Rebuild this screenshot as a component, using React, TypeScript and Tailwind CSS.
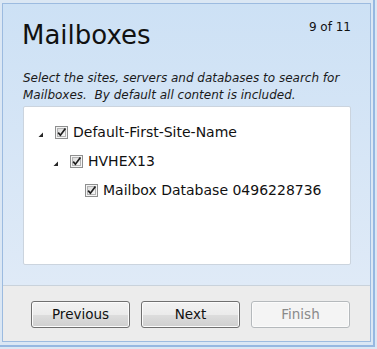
import React from "react";

const font = { fontFamily: '"DejaVu Sans", Verdana, sans-serif' };

function Expander() {
  return (
    <svg width="6" height="6" viewBox="0 0 6 6" className="block">
      <polygon points="5,0.5 5,5 0.5,5" fill="#262626" />
    </svg>
  );
}

function CheckBox() {
  return (
    <svg width="13" height="13" viewBox="0 0 13 13" className="block shrink-0">
      <defs>
        <linearGradient id="cbg" x1="0" y1="0" x2="1" y2="1">
          <stop offset="0" stopColor="#d9d9d9" />
          <stop offset="1" stopColor="#fbfbfb" />
        </linearGradient>
      </defs>
      <rect x="0.5" y="0.5" width="12" height="12" fill="#f4f4f4" stroke="#8e8f8f" />
      <rect x="2.5" y="2.5" width="8" height="8" fill="url(#cbg)" stroke="#b3b3b3" />
      <path d="M3.2 6.6 L5.4 9.2 L10.4 2.4" fill="none" stroke="#1f1f1f" strokeWidth="1.7" />
    </svg>
  );
}

const nodes = [
  { level: 0, label: "Default-First-Site-Name", expander: true },
  { level: 1, label: "HVHEX13", expander: true },
  { level: 2, label: "Mailbox Database 0496228736", expander: false },
];

function Button({ label, disabled }: { label: string; disabled?: boolean }) {
  return (
    <button
      disabled={disabled}
      className={
        disabled
          ? "w-[99px] h-[27px] rounded-[3px] border border-[#b5b9bc] bg-[#f4f4f4] text-[13.5px] text-[#8a8a8a] shadow-[inset_0_0_0_1px_#fbfbfb]"
          : "w-[99px] h-[27px] rounded-[3px] border border-[#707070] bg-[linear-gradient(#f2f2f2_0%,#ebebeb_50%,#dddddd_51%,#cfcfcf_100%)] text-[13.5px] text-[#111] shadow-[inset_0_0_0_1px_#fcfcfc]"
      }
      style={font}
    >
      {label}
    </button>
  );
}

export default function App() {
  return (
    <div className="w-[377px] h-[349px] bg-[#dbe7f4] overflow-hidden" style={font}>
      <div className="w-[375px] h-[347px] border-r-2 border-b-2 border-[#96b8e1] pt-[3px] pl-[2px]">
        <div className="w-[369px] h-[339px] border border-[#9cbbe0] shadow-[inset_0_0_0_1px_#f6f9fd] flex flex-col">
          {/* wizard page */}
          <div className="flex-1 bg-[linear-gradient(#cde1f5,#dfeaf7)] pl-[20px] pr-[19px]">
            <div className="flex justify-between items-start pt-[15px]">
              <h1 className="text-[26px] leading-[32px] text-[#111] -ml-px">Mailboxes</h1>
              <span className="text-[12px] leading-[16px] text-[#111]">9 of 11</span>
            </div>
            <p className="mt-[19px] text-[12px] leading-[17px] italic text-[#1a1a1a]">
              Select the sites, servers and databases to search for Mailboxes.&nbsp; By default all content is included.
            </p>
            <div className="mt-[2px] h-[159px] bg-white border border-[#cbd4de] rounded-[2px] pt-[11px] pl-[12px]">
              {nodes.map((n) => (
                <div
                  key={n.label}
                  className="h-[29px] flex items-center"
                  style={{ paddingLeft: n.level * 15 }}
                >
                  <div className="w-[19px] h-[13px] flex items-end pl-[2px] pb-[1px]">
                    {n.expander && <Expander />}
                  </div>
                  <CheckBox />
                  <span className="ml-[5px] text-[14px] text-[#111]">{n.label}</span>
                </div>
              ))}
            </div>
          </div>
          {/* buttons */}
          <div className="h-[56px] shrink-0 border-t border-[#c9d2db] bg-[#ececec] pt-[15px] pl-[28px] flex gap-[11px]">
            <Button label="Previous" />
            <Button label="Next" />
            <Button label="Finish" disabled />
          </div>
        </div>
      </div>
    </div>
  );
}
